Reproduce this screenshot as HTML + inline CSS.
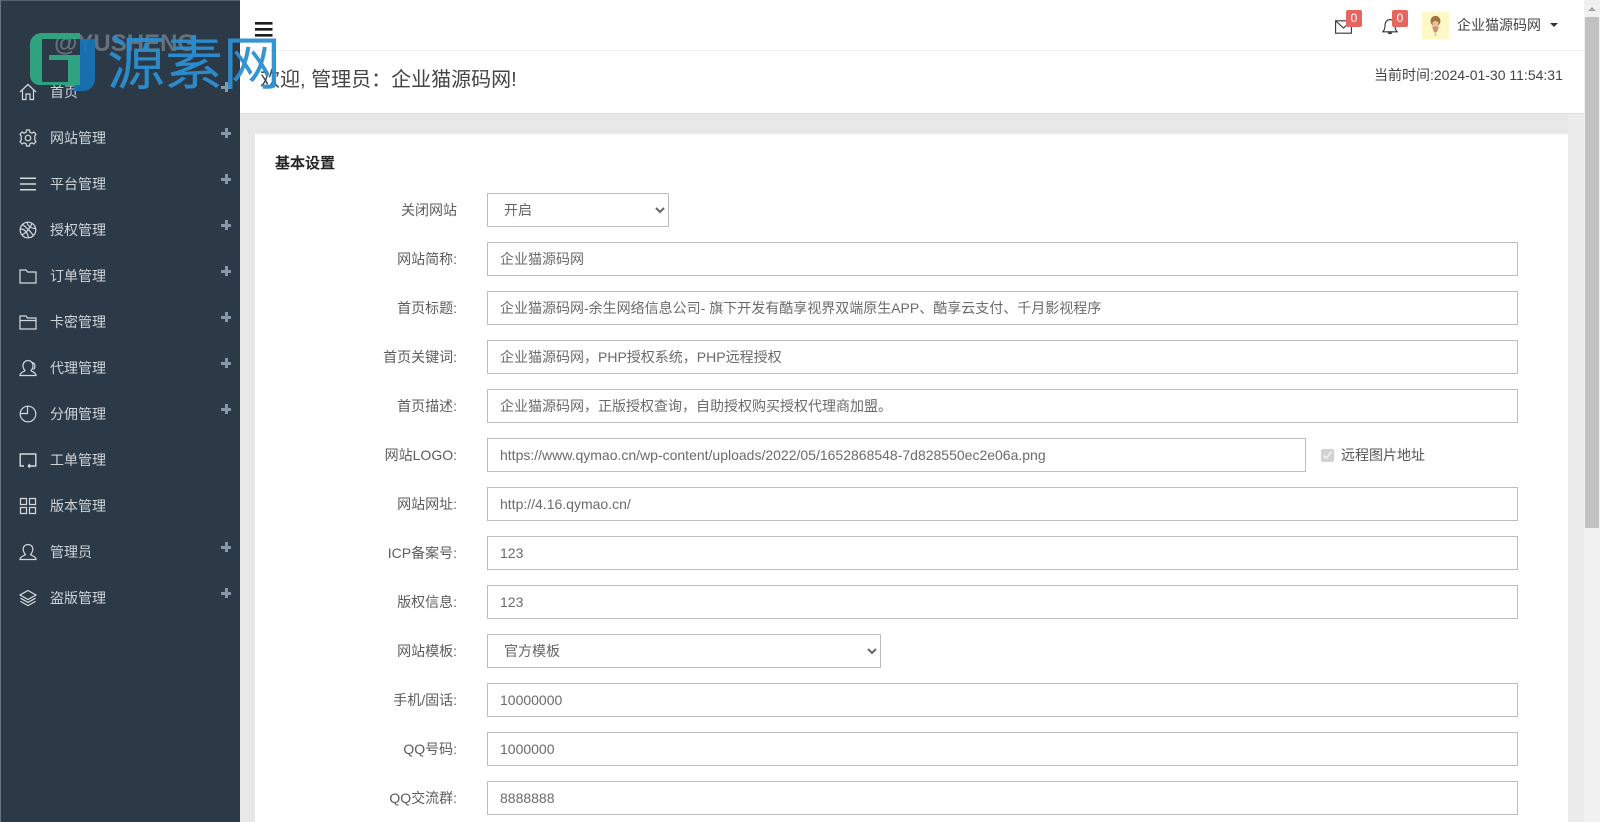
<!DOCTYPE html>
<html lang="zh-CN">
<head>
<meta charset="utf-8">
<title>基本设置</title>
<style>
html,body{margin:0;padding:0;width:1600px;height:822px;overflow:hidden;background:#e8e8e8;}
body{position:relative;font-family:"Liberation Sans","Noto Sans CJK SC",sans-serif;font-size:14px;color:#555;}
.a{position:absolute;}
#side{left:0;top:0;width:240px;height:822px;background:#2c3a48;border-left:1px solid #66727e;border-top:1px solid #56626e;box-sizing:border-box;}
.mi{position:absolute;left:50px;width:120px;height:20px;line-height:20px;color:#cfd4d9;font-size:14px;white-space:nowrap;}
.pl{position:absolute;left:221px;width:10px;height:10px;}
.pl:before{content:"";position:absolute;left:0;top:3.5px;width:10px;height:3px;background:#8798ab;}
.pl:after{content:"";position:absolute;left:3.5px;top:0;width:3px;height:10px;background:#8798ab;}
.ic{position:absolute;left:19px;width:18px;height:18px;fill:none;stroke:#d5d9dd;stroke-width:1.2;}
#hd{left:240px;top:0;width:1344px;height:51px;background:#fff;border-bottom:1px solid #efefef;box-sizing:border-box;}
#wel{left:240px;top:51px;width:1344px;height:63px;background:#fff;border-bottom:1px solid #dcdcdc;box-sizing:border-box;}
#card{left:255px;top:134px;width:1313px;height:688px;background:#fff;}
.lb{position:absolute;left:300px;width:157px;text-align:right;height:20px;line-height:20px;color:#5c5c5c;font-size:14px;white-space:nowrap;}
input.t{position:absolute;left:487px;width:1031px;height:34px;box-sizing:border-box;border:1px solid #bdbdbd;background:#fff;padding:0 12px;margin:0;font:14px "Liberation Sans","Noto Sans CJK SC",sans-serif;color:#6b6b6b;outline:none;}
select.s{position:absolute;left:487px;height:34px;box-sizing:border-box;border:1px solid #bdbdbd;background:#fff;padding:0 12px;margin:0;font:14px "Liberation Sans","Noto Sans CJK SC",sans-serif;color:#666;outline:none;border-radius:0;}
.bd{position:absolute;top:10px;width:16px;height:17px;background:#e5665f;color:#fff;font-size:12px;line-height:16px;text-align:center;border-radius:2px;}
#sb{left:1584px;top:0;width:16px;height:822px;background:#f1f1f1;}
#th{left:1585px;top:17px;width:14px;height:511px;background:#c1c1c1;}
</style>
</head>
<body>
<div class="a" style="left:1568px;top:114px;width:16px;height:708px;background:#ececec"></div>

<div id="side" class="a"></div>

<svg class="ic" style="top:83px" viewBox="0 0 18 18"><path d="M1 9 9 1.5 17 9M3.5 7.5V16.5H7V11H11V16.5H14.5V7.5"/></svg>
<svg class="ic" style="top:129px" viewBox="0 0 18 18"><circle cx="9" cy="9" r="2.8"/><path d="M7.5 1H10.5L11 3.3 13 4.2 15 3 17 5.4 15.6 7.2 16 9 15.6 10.8 17 12.6 15 15 13 13.8 11 14.7 10.5 17H7.5L7 14.7 5 13.8 3 15 1 12.6 2.4 10.8 2 9 2.4 7.2 1 5.4 3 3 5 4.2 7 3.3Z"/></svg>
<svg class="ic" style="top:175px" viewBox="0 0 18 18"><path d="M1 3.2H17M1 9H17M1 14.8H17" stroke-width="1.5"/></svg>
<svg class="ic" style="top:221px" viewBox="0 0 18 18"><circle cx="9" cy="9" r="7.8"/><path d="M3.5 3.5C7 6 11 10 14.5 14.5M13 2.5C11 7 7.5 11.5 3 14M1.5 8C5 8 8 10 9.5 16.5M8 1.5C9 5 12 7.5 16.5 7.5"/></svg>
<svg class="ic" style="top:267px" viewBox="0 0 18 18"><path d="M1 3H7L8.5 5H17V16H1Z"/></svg>
<svg class="ic" style="top:313px" viewBox="0 0 18 18"><path d="M1 3H7L8.5 5H17V16H1ZM1 7.5H17"/></svg>
<svg class="ic" style="top:359px" viewBox="0 0 18 18"><path d="M1 16.5C1 13 5 13 6 11.5 4.5 10 4 8 4 6.5 4 3.5 6.5 1.5 9 1.5 11.5 1.5 14 3.5 14 6.5 14 8 13.5 10 12 11.5 13 13 17 13.2 17 16.5ZM13 3.5C15 3.5 16 5.5 16 7 16 8.5 15.5 9.5 14.5 10.5"/></svg>
<svg class="ic" style="top:405px" viewBox="0 0 18 18"><circle cx="9" cy="9" r="7.8"/><path d="M8.5 1.2V8.5H1.4"/></svg>
<svg class="ic" style="top:451px" viewBox="0 0 18 18"><path d="M5 15H1.2V3H16.8V15H9M9 15 11 13.2M9 15 11 16.6" stroke-width="1.4"/></svg>
<svg class="ic" style="top:497px" viewBox="0 0 18 18"><path d="M1.5 1.5H7.5V7.5H1.5ZM10.5 1.5H16.5V7.5H10.5ZM1.5 10.5H7.5V16.5H1.5ZM10.5 10.5H16.5V16.5H10.5Z"/></svg>
<svg class="ic" style="top:543px" viewBox="0 0 18 18"><path d="M1 16.5C1 13 5.5 13 6.5 11.5 5 10 4.2 8 4.2 6 4.2 3.2 6.5 1.5 9 1.5 11.5 1.5 13.8 3.2 13.8 6 13.8 8 13 10 11.5 11.5 12.5 13 17 13 17 16.5Z"/></svg>
<svg class="ic" style="top:589px" viewBox="0 0 18 18"><path d="M9 1.5 17 6 9 10.5 1 6ZM1.5 9.2 9 13.4 16.5 9.2M1.5 12.4 9 16.6 16.5 12.4"/></svg>

<div class="mi" style="top:82px">首页</div><div class="pl" style="top:82px"></div>
<div class="mi" style="top:128px">网站管理</div><div class="pl" style="top:128px"></div>
<div class="mi" style="top:174px">平台管理</div><div class="pl" style="top:174px"></div>
<div class="mi" style="top:220px">授权管理</div><div class="pl" style="top:220px"></div>
<div class="mi" style="top:266px">订单管理</div><div class="pl" style="top:266px"></div>
<div class="mi" style="top:312px">卡密管理</div><div class="pl" style="top:312px"></div>
<div class="mi" style="top:358px">代理管理</div><div class="pl" style="top:358px"></div>
<div class="mi" style="top:404px">分佣管理</div><div class="pl" style="top:404px"></div>
<div class="mi" style="top:450px">工单管理</div>
<div class="mi" style="top:496px">版本管理</div>
<div class="mi" style="top:542px">管理员</div><div class="pl" style="top:542px"></div>
<div class="mi" style="top:588px">盗版管理</div><div class="pl" style="top:588px"></div>

<div id="hd" class="a"></div>
<svg class="a" style="left:255px;top:22px" width="18" height="15" viewBox="0 0 18 15"><path d="M0 1.3H17.5M0 7.3H17.5M0 13.3H17.5" stroke="#1c1c1c" stroke-width="2.6" fill="none"/></svg>

<svg class="a" style="left:1335px;top:20px" width="17" height="14" viewBox="0 0 17 14" fill="none" stroke="#333" stroke-width="1.1"><path d="M.6.8H16.4V13.2H.6ZM.8 1 8.5 8 16.2 1"/></svg>
<div class="bd" style="left:1346px">0</div>
<svg class="a" style="left:1382px;top:18px" width="16" height="17" viewBox="0 0 16 17" fill="none" stroke="#333" stroke-width="1.1"><path d="M.8 13.8C2.6 12 3 10.5 3 7.5 3 4 5 1.6 8 1.6 11 1.6 13 4 13 7.5 13 10.5 13.4 12 15.2 13.8Z"/><path d="M6 14.5Q8 17 10 14.5" fill="#333"/></svg>
<div class="bd" style="left:1392px">0</div>
<svg class="a" style="left:1422px;top:12px" width="27" height="27" viewBox="0 0 27 27"><rect width="27" height="27" fill="#fdf8c6"/><ellipse cx="13.5" cy="9" rx="5" ry="5.2" fill="#a5733f"/><ellipse cx="13.5" cy="11.5" rx="3" ry="2.6" fill="#e8c19c"/><path d="M10 14.5H17L15 20H12Z" fill="#cf8f7c"/><rect x="12.5" y="20" width="2" height="4" fill="#e3c4a8"/></svg>
<div class="a" style="left:1457px;top:15px;height:20px;line-height:20px;color:#444;white-space:nowrap">企业猫源码网</div>
<div class="a" style="left:1550px;top:23px;width:0;height:0;border-left:4px solid transparent;border-right:4px solid transparent;border-top:4.5px solid #333"></div>

<div id="wel" class="a"></div>
<div class="a" style="left:260px;top:65px;height:30px;line-height:30px;font-size:20px;color:#444;white-space:nowrap">欢迎, 管理员：企业猫源码网!</div>
<div class="a" style="left:1374px;top:65px;height:20px;line-height:20px;color:#444;white-space:nowrap">当前时间:2024-01-30 11:54:31</div>

<div id="card" class="a"></div>
<div class="a" style="left:275px;top:154px;height:20px;line-height:20px;font-size:15px;color:#222;font-weight:500;-webkit-text-stroke:.3px #222;white-space:nowrap">基本设置</div>

<div class="lb" style="top:200px">关闭网站</div>
<select class="s" style="top:193px;width:182px"><option>开启</option></select>

<div class="lb" style="top:249px">网站简称:</div>
<input class="t" style="top:242px" value="企业猫源码网">

<div class="lb" style="top:298px">首页标题:</div>
<input class="t" style="top:291px" value="企业猫源码网-余生网络信息公司- 旗下开发有酷享视界双端原生APP、酷享云支付、千月影视程序">

<div class="lb" style="top:347px">首页关键词:</div>
<input class="t" style="top:340px" value="企业猫源码网，PHP授权系统，PHP远程授权">

<div class="lb" style="top:396px">首页描述:</div>
<input class="t" style="top:389px" value="企业猫源码网，正版授权查询，自助授权购买授权代理商加盟。">

<div class="lb" style="top:445px">网站LOGO:</div>
<input class="t" style="top:438px;width:819px" value="https://www.qymao.cn/wp-content/uploads/2022/05/1652868548-7d828550ec2e06a.png">
<input type="checkbox" checked disabled class="a" style="left:1321px;top:449px;width:13px;height:13px;margin:0">
<div class="a" style="left:1341px;top:445px;height:20px;line-height:20px;color:#555;white-space:nowrap">远程图片地址</div>

<div class="lb" style="top:494px">网站网址:</div>
<input class="t" style="top:487px" value="http://4.16.qymao.cn/">

<div class="lb" style="top:543px">ICP备案号:</div>
<input class="t" style="top:536px" value="123">

<div class="lb" style="top:592px">版权信息:</div>
<input class="t" style="top:585px" value="123">

<div class="lb" style="top:641px">网站模板:</div>
<select class="s" style="top:634px;width:394px"><option>官方模板</option></select>

<div class="lb" style="top:690px">手机/固话:</div>
<input class="t" style="top:683px" value="10000000">

<div class="lb" style="top:739px">QQ号码:</div>
<input class="t" style="top:732px" value="1000000">

<div class="lb" style="top:788px">QQ交流群:</div>
<input class="t" style="top:781px" value="8888888">

<div id="sb" class="a"></div>
<div id="th" class="a"></div>
<div class="a" style="left:1588px;top:7px;width:0;height:0;border-left:4px solid transparent;border-right:4px solid transparent;border-bottom:4px solid #a3a3a3"></div>

<!-- watermark -->
<div class="a" style="left:54px;top:30px;height:28px;line-height:28px;font-size:24px;font-weight:bold;color:#7a848e;opacity:.75;white-space:nowrap">@YUSHENG</div>
<svg class="a" style="left:28px;top:30px" width="70" height="65" viewBox="0 0 70 65">
<path d="M14 3H52V9H14V52H40V30H21V25H52V55H12C6 55 2 51 2 45V15C2 8 7 3 14 3Z" fill="#2fa883" fill-opacity=".95"/>
<path d="M52 9H67V48C67 56 62 61 54 61H46V55H52Z" fill="#1873b6" fill-opacity=".92"/>
</svg>
<div class="a" style="left:107px;top:29px;height:72px;line-height:72px;font-size:58px;color:#2b8fd0;white-space:nowrap;letter-spacing:0;opacity:.95">源素网</div>
</body>
</html>
